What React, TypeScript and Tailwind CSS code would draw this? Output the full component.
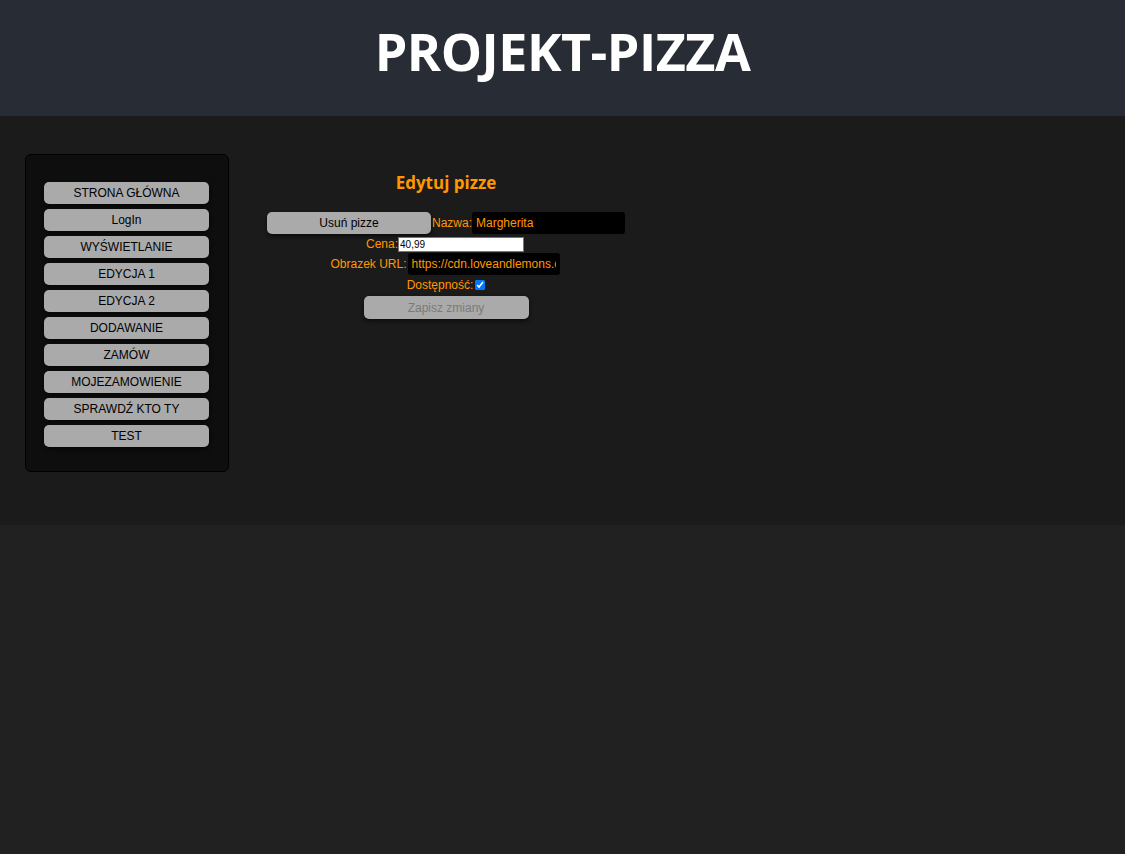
const menu = [
  "STRONA GŁÓWNA",
  "LogIn",
  "WYŚWIETLANIE",
  "EDYCJA 1",
  "EDYCJA 2",
  "DODAWANIE",
  "ZAMÓW",
  "MOJEZAMOWIENIE",
  "SPRAWDŹ KTO TY",
  "TEST",
];

export default function App() {
  return (
    <div className="min-h-[854px] bg-[#212121] font-['Liberation_Sans',Arial,sans-serif]">
      {/* Header */}
      <header className="h-[116px] bg-[#282c34] flex items-center justify-center">
        <h1 className="text-white text-[52px] font-bold tracking-[-0.5px] font-['Open_Sans',sans-serif] leading-none pb-[15px]">
          PROJEKT-PIZZA
        </h1>
      </header>

      {/* Main */}
      <main className="h-[409px] bg-[#1b1b1b] flex items-start gap-[38px] px-[25px] pt-[38px]">
        {/* Sidebar */}
        <nav className="w-[204px] h-[318px] bg-[#0e0e0e] border border-black rounded-[6px] pt-[27px] px-[18px] flex flex-col gap-[5px]">
          {menu.map((item) => (
            <button
              key={item}
              className="h-[22px] w-[165px] bg-[#aaaaaa] text-black text-[12px] rounded-[5px] shadow-[0_2px_4px_rgba(0,0,0,0.6)]"
            >
              {item}
            </button>
          ))}
        </nav>

        {/* Edit form */}
        <section className="w-[358px] flex flex-col items-center pt-[17px]">
          <h2 className="text-[#ff9800] text-[17px] font-bold font-['Open_Sans',sans-serif] leading-[24px] mb-[17px]">
            Edytuj pizze
          </h2>

          <div className="flex items-center h-[22px]">
            <button className="h-[22px] w-[164px] bg-[#aaaaaa] text-black text-[12px] rounded-[5px] shadow-[0_2px_4px_rgba(0,0,0,0.6)]">
              Usuń pizze
            </button>
            <label className="text-[#ff9800] text-[12px] leading-[15px] ml-[1px]">Nazwa:</label>
            <input
              readOnly
              value="Margherita"
              className="h-[22px] w-[153px] bg-black text-[#ff9800] text-[12px] rounded-[3px] px-[4px] outline-none"
            />
          </div>

          <div className="flex items-center h-[15px] mt-[3px] -ml-[2px]">
            <label className="text-[#ff9800] text-[12px] leading-[15px]">Cena:</label>
            <input
              readOnly
              value="40,99"
              className="h-[15px] w-[126px] bg-white text-black text-[10px] border border-[#767676] px-[1px] outline-none"
            />
          </div>

          <div className="flex items-center h-[22px] mt-[1px] -ml-[2px]">
            <label className="text-[#ff9800] text-[12px] leading-[15px] mr-[1px]">Obrazek URL:</label>
            <input
              readOnly
              value="https://cdn.loveandlemons.com/wp-content/uploads/2019/09/margherita-pizza.jpg"
              className="h-[22px] w-[152px] bg-black text-[#ff9800] text-[12px] rounded-[3px] px-[4px] outline-none"
            />
          </div>

          <div className="flex items-center h-[16px] mt-[2px]">
            <label className="text-[#ff9800] text-[12px] leading-[15px] mr-[2px]">Dostępność:</label>
            <input type="checkbox" readOnly checked className="w-[10px] h-[10px] accent-[#0075ff]" />
          </div>

          <button
            disabled
            className="mt-[3px] h-[23px] w-[165px] bg-[#aaaaaa] text-[#7a7a7a] text-[12px] rounded-[5px] shadow-[0_2px_4px_rgba(0,0,0,0.6)]"
          >
            Zapisz zmiany
          </button>
        </section>
      </main>
    </div>
  );
}
